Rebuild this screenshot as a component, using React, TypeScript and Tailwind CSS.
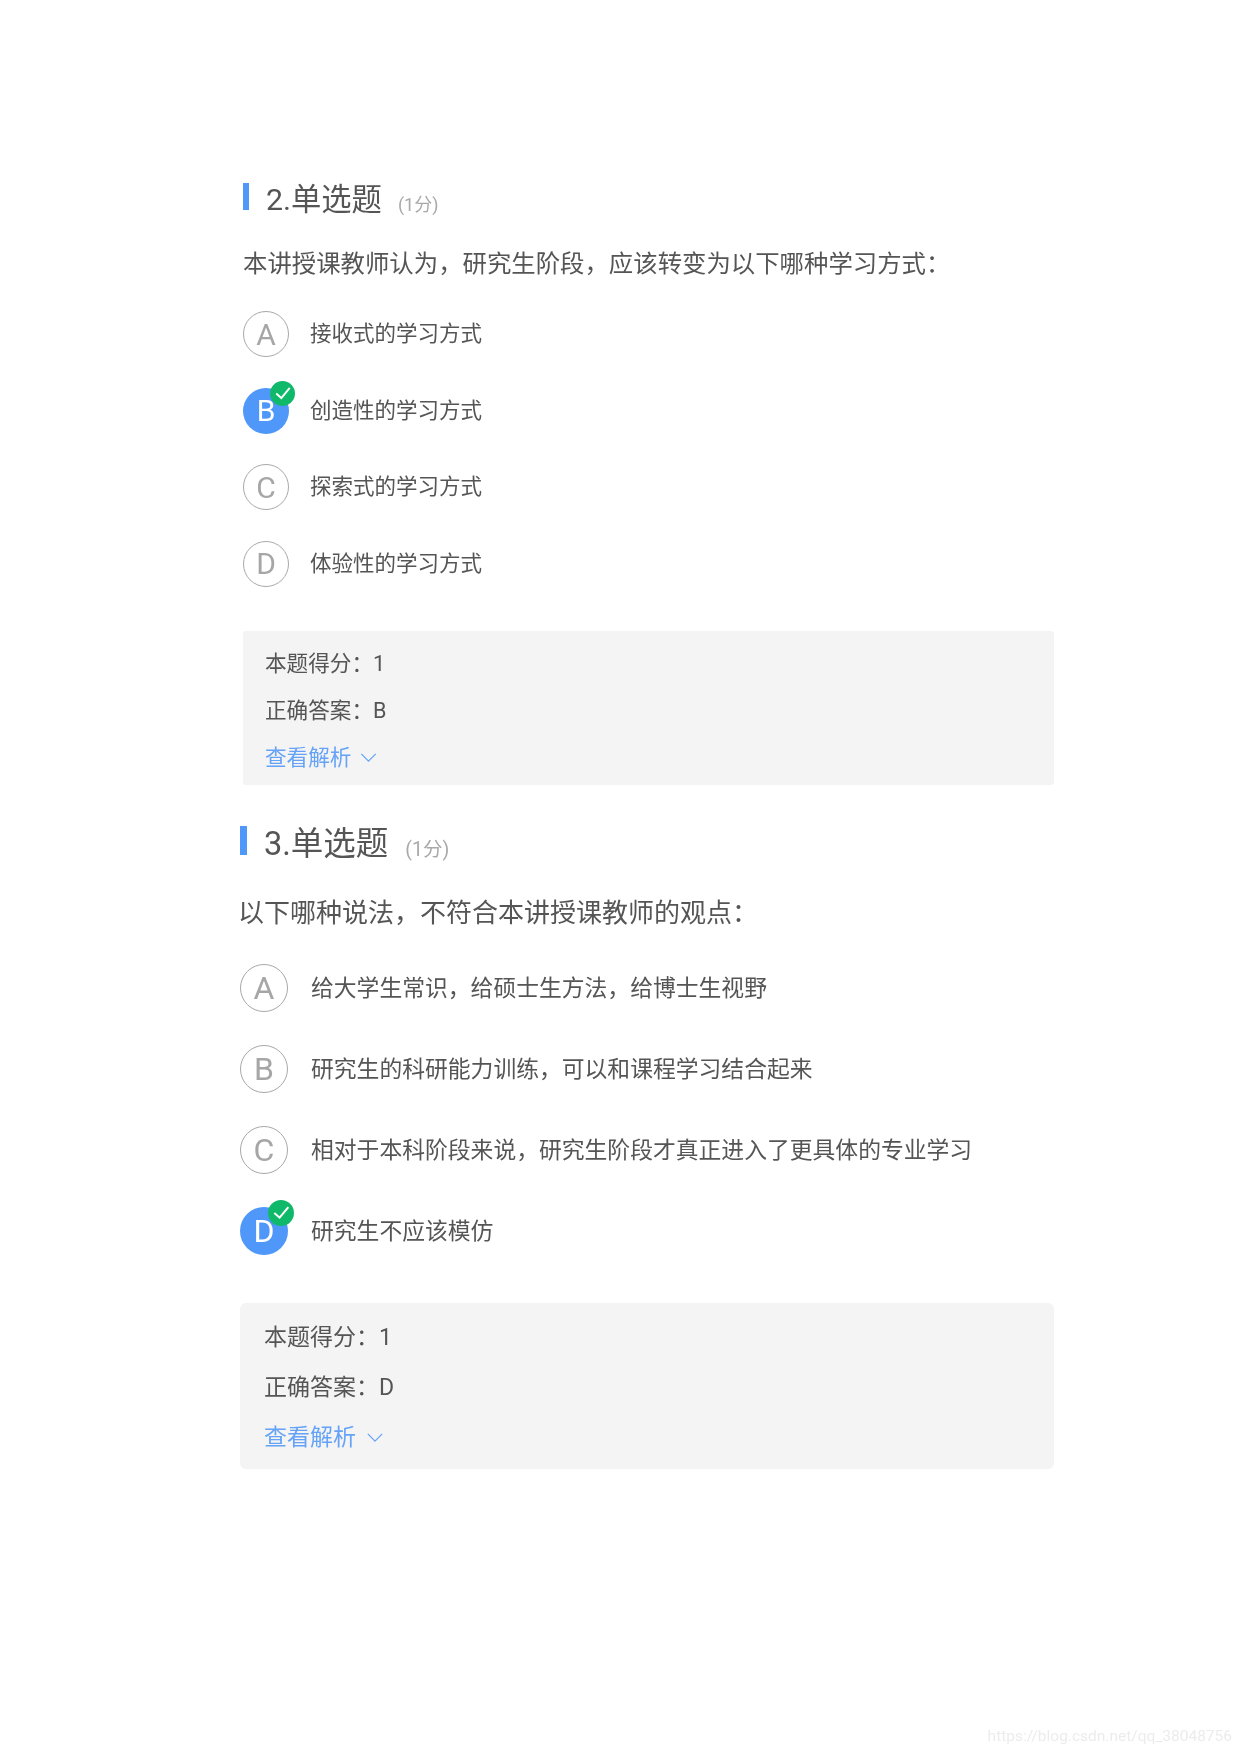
import React from 'react';

const FONT = "font-['Roboto','Noto_Sans_CJK_SC',sans-serif]";

function Badge({ className }: { className: string }) {
  return (
    <span className={`absolute flex items-center justify-center rounded-full bg-[#10b96a] ${className}`}>
      <svg className="h-[72%] w-[72%]" viewBox="0 0 16 16" fill="none" stroke="#fff" strokeWidth={1.7}>
        <path d="M2 8.5 6.5 12.5 14 3.5" />
      </svg>
    </span>
  );
}

function Chevron({ className }: { className: string }) {
  return (
    <svg className={className} viewBox="0 0 18 10" fill="none" stroke="#66a3f7" strokeWidth={1.4}>
      <path d="M1 1 9 9 17 1" />
    </svg>
  );
}

function OptionSmall({ letter, text, checked }: { letter: string; text: string; checked?: boolean }) {
  return (
    <div className="flex h-[46px] items-center gap-[21px]">
      <span
        className={`relative flex h-[46px] w-[46px] shrink-0 items-center justify-center rounded-full text-[30px] ${
          checked ? 'bg-[#4f97f8] text-white' : 'border border-[#a8a8a8] text-[#a6a6a6]'
        }`}
      >
        {letter}
        {checked && <Badge className="-right-[6px] -top-[7px] h-[25px] w-[25px]" />}
      </span>
      <span className="mt-[1px] text-[21.5px] text-[#555]">{text}</span>
    </div>
  );
}

function OptionLarge({ letter, text, checked }: { letter: string; text: string; checked?: boolean }) {
  return (
    <div className="flex h-[48px] items-center gap-[23px]">
      <span
        className={`relative flex h-[48px] w-[48px] shrink-0 items-center justify-center rounded-full text-[32px] ${
          checked ? 'bg-[#4f97f8] text-white' : 'border border-[#a8a8a8] text-[#a6a6a6]'
        }`}
      >
        {letter}
        {checked && <Badge className="-right-[6px] -top-[7px] h-[26px] w-[26px]" />}
      </span>
      <span className="mt-[3px] text-[22.8px] text-[#555]">{text}</span>
    </div>
  );
}

export default function App() {
  return (
    <div className={`h-[1754px] w-[1240px] overflow-hidden bg-white blur-[0.4px] ${FONT}`}>
      {/* question 2 */}
      <div className="ml-[243px] w-[811px] pt-[183px]">
        <div className="flex h-[30px] items-center">
          <span className="mb-[3px] h-[27px] w-[6px] bg-[#4f97f8]" />
          <span className="ml-[17px] mt-[4px] text-[30.3px] leading-[30px] text-[#555]">2.单选题</span>
          <span className="ml-[16px] mt-[13px] text-[18px] text-[#a9a9a9]">(1分)</span>
        </div>
        <p className="mt-[35px] text-[24.4px] leading-[32px] text-[#555]">
          本讲授课教师认为，研究生阶段，应该转变为以下哪种学习方式：
        </p>
        <div className="mt-[31px] flex flex-col gap-[30.5px]">
          <OptionSmall letter="A" text="接收式的学习方式" />
          <OptionSmall letter="B" text="创造性的学习方式" checked />
          <OptionSmall letter="C" text="探索式的学习方式" />
          <OptionSmall letter="D" text="体验性的学习方式" />
        </div>
        <div className="mt-[44px] flex h-[154px] flex-col justify-center gap-[17px] rounded-[3px] bg-[#f4f4f4] px-[22px] pt-[6px] text-[21.6px] leading-[30px] text-[#555]">
          <div>本题得分：1</div>
          <div>正确答案：B</div>
          <div className="flex items-center text-[#66a3f7]">
            查看解析
            <Chevron className="ml-[9px] h-[9px] w-[17px]" />
          </div>
        </div>
      </div>

      {/* question 3 */}
      <div className="ml-[240px] mt-[42px] w-[814px]">
        <div className="flex h-[30px] items-center">
          <span className="mb-[2px] h-[29px] w-[7px] bg-[#4f97f8]" />
          <span className="ml-[17px] mt-[4px] text-[32.5px] leading-[30px] text-[#555]">3.单选题</span>
          <span className="ml-[17px] mt-[17px] text-[19.5px] text-[#a9a9a9]">(1分)</span>
        </div>
        <p className="-ml-[2px] mt-[39px] text-[26px] leading-[34px] text-[#555]">
          以下哪种说法，不符合本讲授课教师的观点：
        </p>
        <div className="mt-[34px] flex flex-col gap-[33px]">
          <OptionLarge letter="A" text="给大学生常识，给硕士生方法，给博士生视野" />
          <OptionLarge letter="B" text="研究生的科研能力训练，可以和课程学习结合起来" />
          <OptionLarge letter="C" text="相对于本科阶段来说，研究生阶段才真正进入了更具体的专业学习" />
          <OptionLarge letter="D" text="研究生不应该模仿" checked />
        </div>
        <div className="mt-[48px] flex h-[166px] flex-col justify-center gap-[19px] rounded-[6px] bg-[#f4f4f4] px-[24px] pt-[4px] text-[23px] leading-[31px] text-[#555]">
          <div>本题得分：1</div>
          <div>正确答案：D</div>
          <div className="flex items-center text-[#66a3f7]">
            查看解析
            <Chevron className="ml-[10px] h-[9px] w-[18px]" />
          </div>
        </div>
      </div>

      <div className="mr-[8px] mt-[257px] text-right text-[15.5px] leading-[20px] text-[#ececec]">
        https://blog.csdn.net/qq_38048756
      </div>
    </div>
  );
}
